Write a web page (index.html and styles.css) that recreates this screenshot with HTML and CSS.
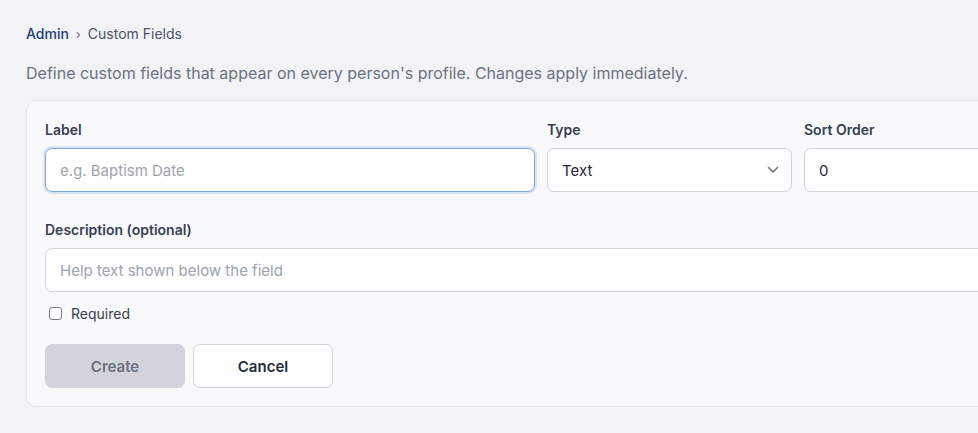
FILE: index.html
```html
<!DOCTYPE html>
<html lang="en">
<head>
<meta charset="utf-8">
<title>Custom Fields</title>
<link rel="stylesheet" href="styles.css">
</head>
<body>
<main class="page">
  <nav class="breadcrumb">
    <a class="crumb-link" href="#">Admin</a>
    <span class="crumb-sep">›</span>
    <span class="crumb-current">Custom Fields</span>
  </nav>
  <p class="intro">Define custom fields that appear on every person's profile. Changes apply immediately.</p>
  <form class="card">
    <div class="row-top">
      <div class="field">
        <label class="field-label" for="label">Label</label>
        <input class="control is-focused" id="label" type="text" placeholder="e.g. Baptism Date" autofocus>
      </div>
      <div class="field">
        <label class="field-label" for="type">Type</label>
        <div class="select-wrap">
          <select class="control select" id="type">
            <option>Text</option>
          </select>
          <svg class="chevron" width="12" height="8" viewBox="0 0 12 8" aria-hidden="true"><path d="M1.5 1.5 L6 6 L10.5 1.5" fill="none" stroke="#6b7280" stroke-width="1.5" stroke-linecap="round" stroke-linejoin="round"/></svg>
        </div>
      </div>
      <div class="field">
        <label class="field-label" for="sort">Sort Order</label>
        <input class="control" id="sort" type="text" value="0">
      </div>
    </div>
    <div class="field field-desc">
      <label class="field-label" for="desc">Description (optional)</label>
      <input class="control" id="desc" type="text" placeholder="Help text shown below the field">
    </div>
    <label class="check-row">
      <input class="check" type="checkbox">
      <span>Required</span>
    </label>
    <div class="actions">
      <button class="btn btn-primary" type="button" disabled>Create</button>
      <button class="btn btn-secondary" type="button">Cancel</button>
    </div>
  </form>
</main>
</body>
</html>
```
FILE: styles.css
```css
html, body {
  margin: 0;
  padding: 0;
  overflow: hidden;
  background: #f1f3f7;
}
body {
  font-family: Inter, "Noto Sans", "Liberation Sans", sans-serif;
  color: #1f2937;
}
.page {
  padding: 24px 26px;
}
.breadcrumb {
  display: flex;
  align-items: center;
  gap: 7px;
  font-size: 14px;
  line-height: 20px;
}
.crumb-link {
  color: #1e4170;
  text-decoration: none;
  font-weight: 500;
}
.crumb-sep {
  color: #6b7280;
  font-size: 13px;
}
.crumb-current {
  color: #4b5563;
}
.intro {
  margin: 17px 0 15px;
  font-size: 16px;
  line-height: 24px;
  color: #6b7280;
}
.card {
  width: 1004px;
  background: #f8f9fb;
  border: 1px solid #e2e5ea;
  border-radius: 10px;
  padding: 19px 18px 18px;
}
.row-top {
  display: grid;
  grid-template-columns: 2fr 1fr 1fr;
  gap: 12px;
}
.field {
  display: flex;
  flex-direction: column;
}
.field-label {
  font-size: 14px;
  line-height: 20px;
  font-weight: 600;
  color: #374151;
  margin-bottom: 8px;
}
.field-desc {
  margin-top: 28px;
}
.control {
  box-sizing: border-box;
  height: 44px;
  width: 100%;
  border: 1px solid #d1d5db;
  border-radius: 7px;
  background: #ffffff;
  padding: 0 14px;
  font-family: inherit;
  font-size: 15px;
  color: #1f2937;
  outline: none;
}
.control::placeholder {
  color: #9ca3af;
}
.control.is-focused,
.control:focus {
  border-color: #7ea7de;
  box-shadow: 0 0 0 2px rgba(96, 149, 222, 0.2);
}
.select-wrap {
  position: relative;
}
.select {
  appearance: none;
  -webkit-appearance: none;
  padding-right: 36px;
}
.chevron {
  position: absolute;
  right: 13px;
  top: 18px;
  pointer-events: none;
}
.check-row {
  display: flex;
  align-items: center;
  gap: 9px;
  margin-top: 12px;
  height: 18px;
  font-size: 14px;
  color: #374151;
  padding-left: 4px;
}
.check {
  appearance: none;
  -webkit-appearance: none;
  width: 13px;
  height: 13px;
  margin: 0;
  border: 1px solid #767b85;
  border-radius: 3px;
  background: #ffffff;
}
.actions {
  display: flex;
  gap: 8px;
  margin-top: 22px;
}
.btn {
  box-sizing: border-box;
  width: 140px;
  height: 44px;
  border-radius: 7px;
  font-family: inherit;
  font-size: 15px;
  font-weight: 600;
}
.btn-primary {
  background: #d1d5db;
  border: 1px solid #d1d5db;
  color: #6b7280;
}
.btn-secondary {
  background: #ffffff;
  border: 1px solid #d1d5db;
  color: #1f2d3d;
}
```
